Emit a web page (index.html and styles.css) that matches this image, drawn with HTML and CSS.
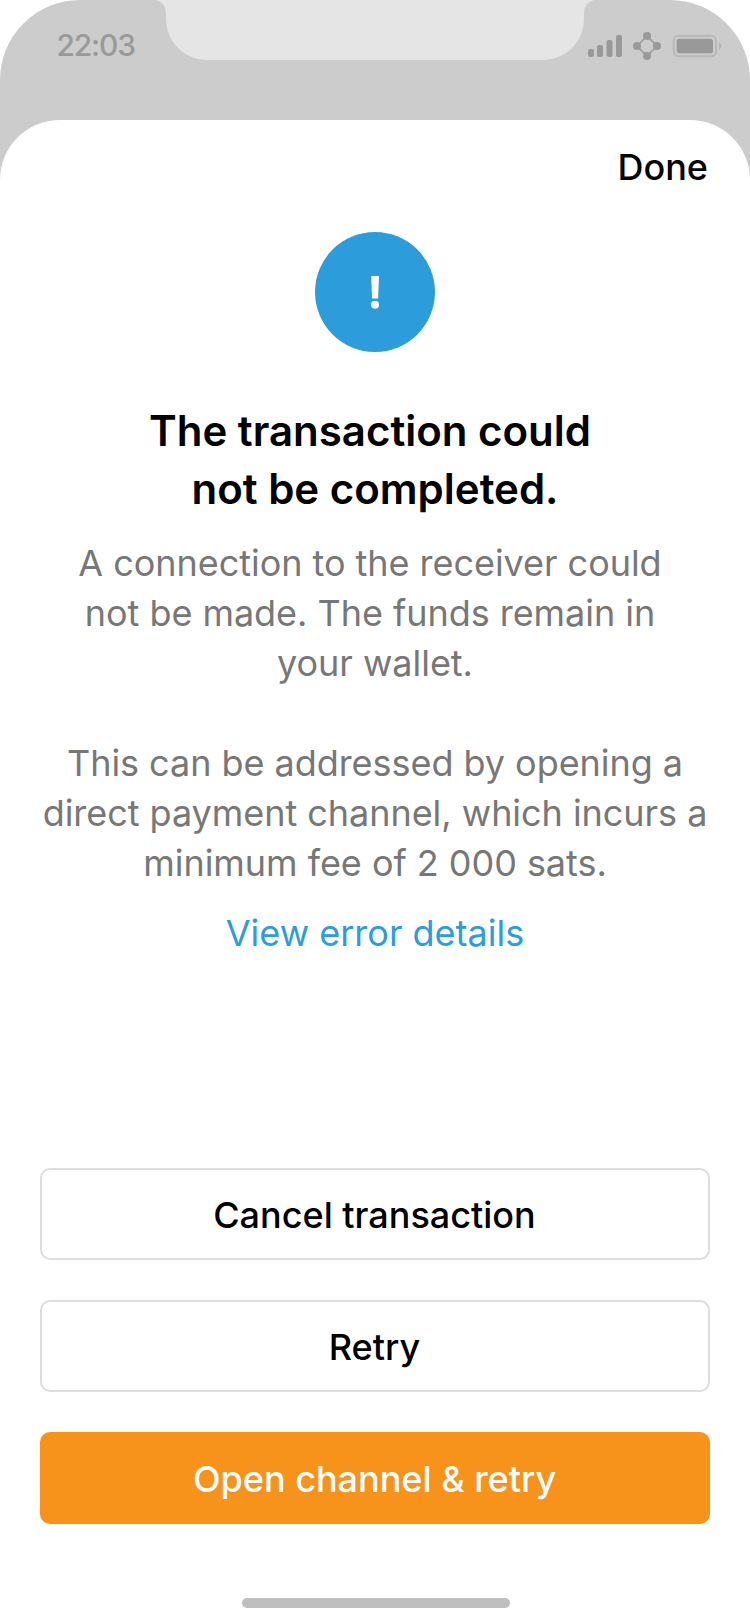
FILE: index.html
```html
<!DOCTYPE html>
<html lang="en"><head><meta charset="utf-8"><title>Transaction</title><link rel="stylesheet" href="styles.css"></head>
<body><div class="phone">
<header class="status"><span class="time">22:03</span>
<svg class="notch" width="438" height="60" viewBox="156 0 438 60"><path d="M156 0H594C587 2 584 7 584 13V18C584 42 566 60 542 60H208C184 60 166 42 166 18V13C166 7 163 2 156 0Z" fill="#e5e5e5"/></svg>
<svg class="icons" width="136" height="30" viewBox="586 31 136 30"><g fill="#999"><rect x="588" y="49" width="6" height="8" rx="2"/><rect x="597" y="45" width="6" height="12" rx="2"/><rect x="606.5" y="40" width="6" height="17" rx="2"/><rect x="616" y="35" width="6" height="22" rx="2"/><circle cx="647" cy="36" r="4"/><circle cx="637" cy="46" r="4"/><circle cx="657" cy="46" r="4"/><circle cx="647" cy="56" r="4"/><rect x="676.7" y="38.7" width="36.3" height="14.6" rx="2.5"/></g><path d="M647 36L657 46L647 56L637 46Z" fill="none" stroke="#999" stroke-width="1.5"/><path d="M719 42Q724 46 719 50Z" fill="#b5b5b5"/><rect x="673.7" y="35.7" width="42.3" height="20.6" rx="5" fill="none" stroke="#b8b8b8" stroke-width="2"/></svg>
</header>
<main class="sheet"><div class="top"><span class="done">Done</span></div>
<div class="badge"><svg width="10" height="34" viewBox="370 275 10 34"><path d="M371.2 276h7.8l-.9 22.5h-6z" fill="#fff"/><circle cx="375" cy="304.7" r="4" fill="#fff"/></svg></div>
<h1 class="title"><span class="first">The transaction could</span><br>not be completed.</h1>
<p class="copy"><span class="shift">A connection to the receiver could</span><br><span class="shift">not be made. The funds remain in</span><br>your wallet.<br><br>This can be addressed by opening a<br>direct payment channel, which incurs a<br>minimum fee of 2 000 sats.</p>
<a class="details">View error details</a>
<div class="actions"><button class="btn">Cancel transaction</button><button class="btn">Retry</button><button class="btn primary">Open channel &amp; retry</button></div>
<div class="home"></div></main></div></body></html>
```
FILE: styles.css
```css
*{box-sizing:border-box}
body{margin:0;background:#fff;font-family:Inter,sans-serif}
.phone{width:750px;height:1624px;background:#ccc;border-radius:80px 80px 0 0;overflow:hidden}
.status{height:120px;display:flex;align-items:flex-start}
.time{width:156px;padding-left:56.5px;padding-top:27px;font-size:30px;line-height:36px;font-weight:500;color:#999;letter-spacing:-1.2px;white-space:nowrap;flex:none}
.notch{flex:none}
.icons{margin:31px 0 0 -8px;flex:none}
.sheet{height:1504px;background:#fff;border-radius:60px 60px 0 0;display:flex;flex-direction:column;align-items:center}
.top{width:100%;height:112px;padding:23px 42px 0;text-align:right;font-size:36px;line-height:48px;font-weight:500}
.badge{width:120px;height:120px;border-radius:50%;background:#2d9cdb;display:flex;align-items:center;justify-content:center}
.title{margin:50px 0 0;font-size:42px;line-height:58px;font-weight:600;text-align:center;white-space:nowrap}
.first{margin-right:10px}
.copy{margin:20px 0 0;font-size:36px;line-height:50px;color:#777;text-align:center;white-space:nowrap;letter-spacing:-.04px}
.shift{margin-right:10px}
.details{margin-top:20px;font-size:36px;line-height:50px;color:#2d9cdb}
.actions{width:670px;margin-top:210px;display:flex;flex-direction:column;gap:40px}
.btn{height:92px;border:2px solid #ddd;border-radius:10px;background:#fff;color:#000;font:500 36px Inter,sans-serif;padding:1px 1px 0 0}
.primary{border-color:#f7931a;background:#f7931a;color:#fff}
.home{width:268px;height:10px;border-radius:5px;background:#bfbfbf;margin:74px 0 0 2px}
```
